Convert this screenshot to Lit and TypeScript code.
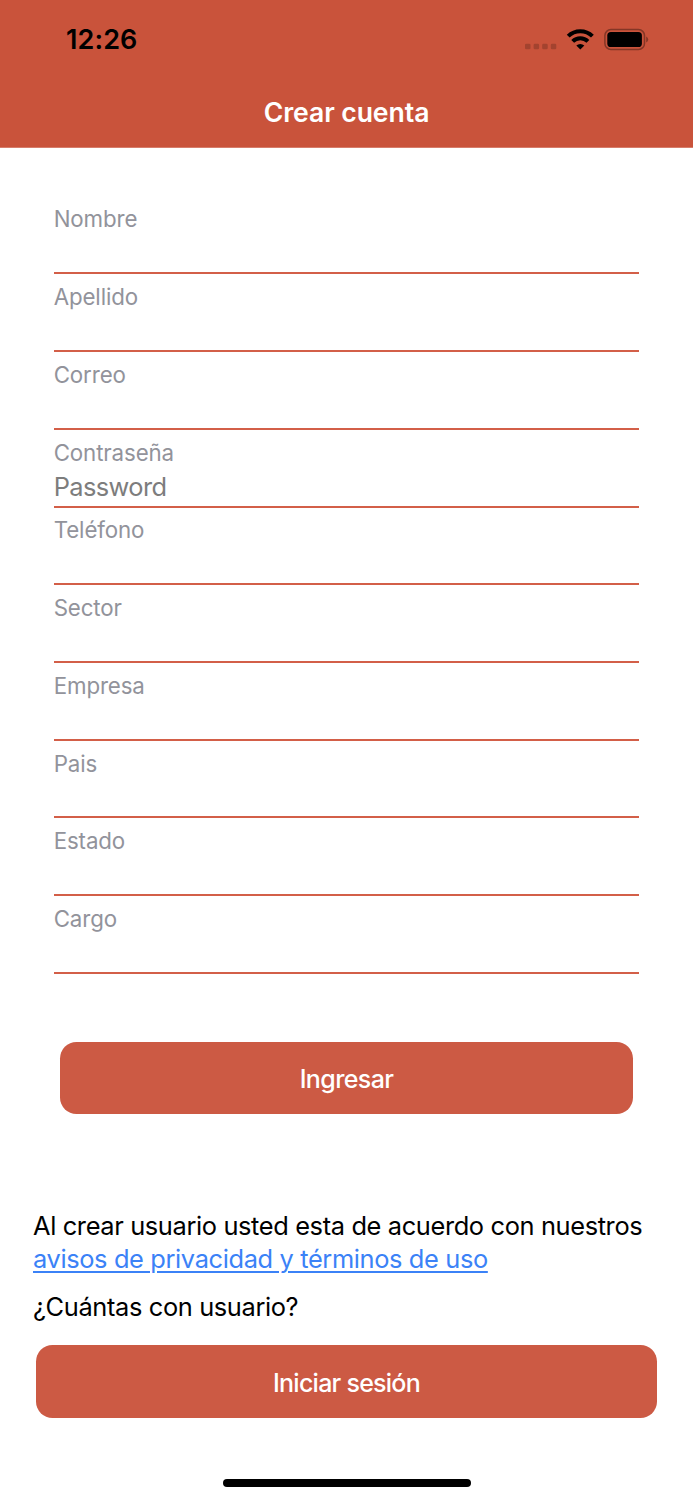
import { LitElement, html, css } from "lit";
import { customElement, property } from "lit/decorators.js";

@customElement("status-bar")
class StatusBar extends LitElement {
  static styles = css`
    :host {
      display: flex;
      justify-content: space-between;
      height: 77px;
      padding: 0 43px 0 66px;
      color: #000;
    }
    .time {
      margin-top: 20px;
      font-size: 27px;
      line-height: 40px;
      font-weight: 600;
      letter-spacing: 0.1px;
    }
    .icons {
      display: block;
      width: 126px;
      height: 30px;
      margin-top: 24px;
    }
  `;
  render() {
    return html`
      <span class="time">12:26</span>
      <svg class="icons" viewBox="524 24 126 30" aria-hidden="true">
        <g fill="#a3432f">
          <rect x="525" y="43.8" width="5.5" height="5.5" rx="1.3" />
          <rect x="533.6" y="43.8" width="5.5" height="5.5" rx="1.3" />
          <rect x="542.2" y="43.8" width="5.5" height="5.5" rx="1.3" />
          <rect x="550.8" y="43.8" width="5.5" height="5.5" rx="1.3" />
        </g>
        <g fill="none" stroke="#000" stroke-width="4">
          <path d="M568.2 36.2a17.2 17.2 0 0 1 24.2 0" />
          <path d="M572.7 41.4a10.8 10.8 0 0 1 15.2 0" />
        </g>
        <path d="M580.3 49.6l-4-4a5.8 5.8 0 0 1 8 0z" />
        <rect x="604.9" y="29.6" width="39.6" height="19.8" rx="6" fill="none" stroke="#843626" stroke-width="1.5" />
        <rect x="607.3" y="32" width="34.6" height="15" rx="3.6" />
        <path d="M646.2 36.4a3.4 3.4 0 0 1 0 6.2z" fill="#843626" />
      </svg>
    `;
  }
}

@customElement("form-field")
class FormField extends LitElement {
  @property() label = "";
  @property() placeholder = "";
  static styles = css`
    :host {
      display: flex;
      flex-direction: column;
      box-sizing: border-box;
      height: 77.74px;
      border-bottom: 2px solid #d35f48;
    }
    .label {
      padding-top: 7.8px;
      font-size: 22.3px;
      line-height: 30px;
      letter-spacing: -0.12px;
      color: #92939b;
    }
    .value {
      padding-top: 1px;
      font-size: 25.4px;
      line-height: 36px;
      letter-spacing: -0.6px;
      color: #7d7d7d;
    }
  `;
  render() {
    return html`
      <span class="label">${this.label}</span>
      <span class="value">${this.placeholder}</span>
    `;
  }
}

@customElement("app-root")
class AppRoot extends LitElement {
  static styles = css`
    :host {
      display: flex;
      flex-direction: column;
      box-sizing: border-box;
      height: 1500px;
      background: #fff;
      font-family: Inter, "Liberation Sans", sans-serif;
      color: #000;
    }
    .header {
      height: 147px;
      background: #c9533b;
      border-bottom: 1px solid #d67d6b;
    }
    .title {
      margin: 0;
      font-size: 26.6px;
      line-height: 70px;
      font-weight: 600;
      letter-spacing: -0.08px;
      color: #fff;
      text-align: center;
    }
    .form {
      margin: 48.6px 53.7px 0;
      display: flex;
      flex-direction: column;
    }
    .button {
      display: flex;
      align-items: center;
      justify-content: center;
      box-sizing: border-box;
      height: 72px;
      padding: 2px 0 0;
      border: 0;
      border-radius: 16.5px;
      background: #cc5a44;
      color: #fff;
      font: 500 25px Inter, "Liberation Sans", sans-serif;
    }
    .submit {
      margin: 68px 60px 0;
      letter-spacing: -0.6px;
    }
    .login {
      margin: 21px 36px 0;
      height: 73px;
      padding-top: 3px;
      letter-spacing: -0.75px;
    }
    .notes {
      margin: 96.4px 33px 0;
      font-size: 25.4px;
      line-height: 32.5px;
      letter-spacing: -0.365px;
    }
    .line {
      margin: 0;
      white-space: nowrap;
    }
    .question {
      margin: 16px 0 0;
    }
    .link {
      color: #3b82f7;
      text-decoration: underline;
      text-decoration-thickness: 1.6px;
      text-underline-offset: 3px;
    }
    .home {
      width: 248px;
      height: 8px;
      margin: auto auto 13px;
      border-radius: 4px;
      background: #000;
    }
  `;
  fields = [
    ["Nombre", ""],
    ["Apellido", ""],
    ["Correo", ""],
    ["Contraseña", "Password"],
    ["Teléfono", ""],
    ["Sector", ""],
    ["Empresa", ""],
    ["Pais", ""],
    ["Estado", ""],
    ["Cargo", ""],
  ];
  render() {
    return html`
      <header class="header">
        <status-bar></status-bar>
        <h1 class="title">Crear cuenta</h1>
      </header>
      <section class="form">
        ${this.fields.map(([l, p]) => html`<form-field .label=${l} .placeholder=${p}></form-field>`)}
      </section>
      <button class="button submit">Ingresar</button>
      <section class="notes">
        <p class="line">Al crear usuario usted esta de acuerdo con nuestros</p>
        <p class="line"><a class="link">avisos de privacidad y términos de uso</a></p>
        <p class="line question">¿Cuántas con usuario?</p>
      </section>
      <button class="button login">Iniciar sesión</button>
      <div class="home"></div>
    `;
  }
}
